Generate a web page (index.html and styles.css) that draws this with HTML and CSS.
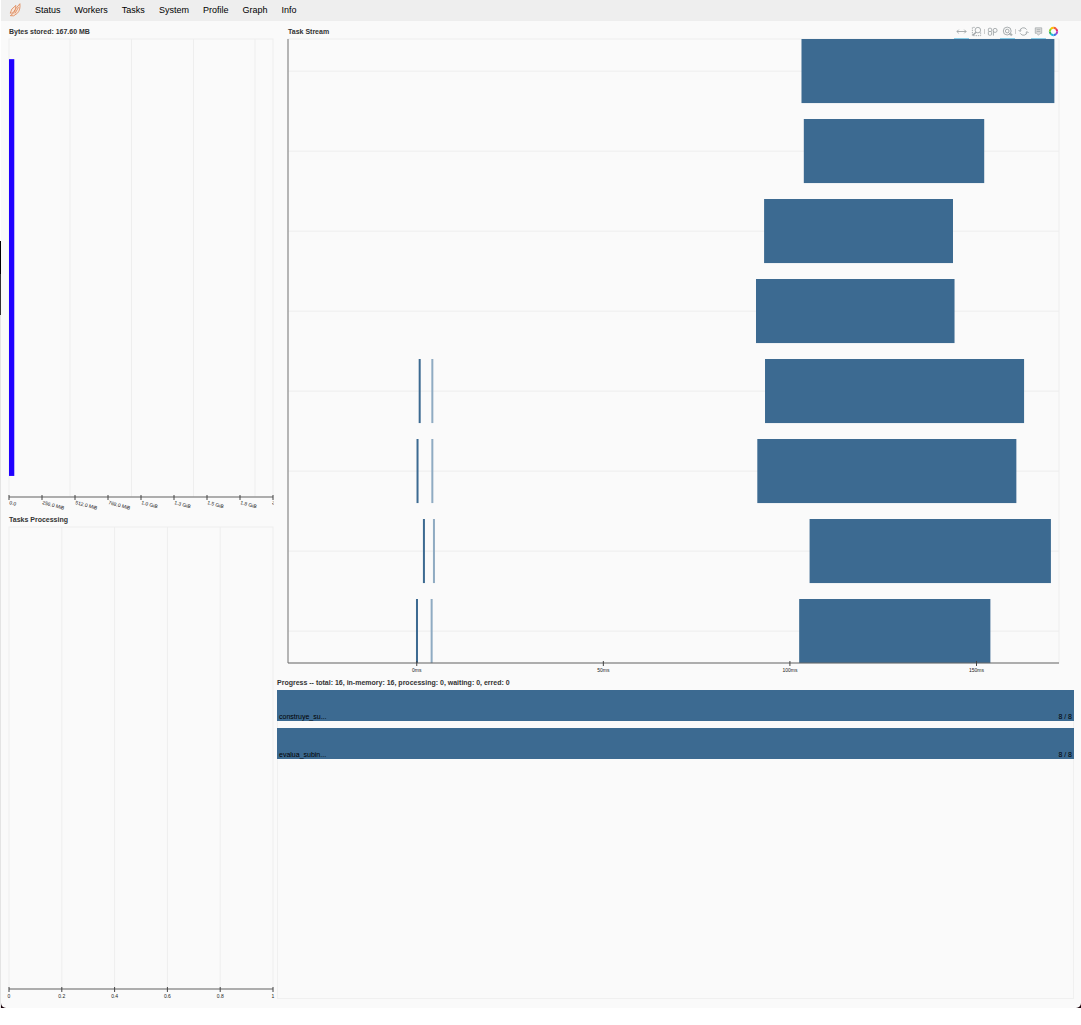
FILE: index.html
```
<!DOCTYPE html>
<html lang="en">
<head>
<meta charset="utf-8">
<meta name="viewport" content="width=device-width, initial-scale=1">
<title>Dask: Status</title>
<link rel="stylesheet" href="styles.css">
</head>
<body>
<div class="frame">
<div class="app">
  <nav class="navbar">
    <a class="brand" href="#" aria-label="Dask">
      <svg viewBox="0 0 11 14" width="12" height="14" fill="#f8e6da" stroke="#dd8352" stroke-width=".8" stroke-linejoin="round">
        <path d="M.7 10.2 2.4 6 6.4 2.4 6 6.2 3.4 9.9Z"/>
        <path d="M6 6 10.4 .7C10.8 4.6 10.200 8 7.8 10.3L4.200 12.800 .8 12.700 5 9.200Z"/>
        <path d="M5.500 10.500 9 4.200" fill="none"/>
      </svg>
    </a>
    <a href="#">Status</a>
    <a href="#">Workers</a>
    <a href="#">Tasks</a>
    <a href="#">System</a>
    <a href="#">Profile</a>
    <a href="#">Graph</a>
    <a href="#">Info</a>
  </nav>

  <main class="dashboard">
    <div class="column">
      <section class="panel bytes">
        <h2>Bytes stored: 167.60 MB</h2>
        <svg class="plot">
          <rect class="outline" width="100%" height="100%"/>
          <g class="grid">
            <line x1="23.1%" x2="23.1%" y2="100%"/><line x1="46.4%" x2="46.4%" y2="100%"/>
            <line x1="69.9%" x2="69.9%" y2="100%"/><line x1="93.2%" x2="93.2%" y2="100%"/>
          </g>
          <rect class="memory" y="4.4%" width="2%" height="91%"/>
        </svg>
        <svg class="axis slanted">
          <line class="rule" x2="100%"/>
          <svg><path d="M0-2V3"/><text>0.0</text></svg>
          <svg x="12.5%"><path d="M0-2V3"/><text>256.0 MiB</text></svg>
          <svg x="25%"><path d="M0-2V3"/><text>512.0 MiB</text></svg>
          <svg x="37.5%"><path d="M0-2V3"/><text>768.0 MiB</text></svg>
          <svg x="50%"><path d="M0-2V3"/><text>1.0 GiB</text></svg>
          <svg x="62.5%"><path d="M0-2V3"/><text>1.3 GiB</text></svg>
          <svg x="75%"><path d="M0-2V3"/><text>1.5 GiB</text></svg>
          <svg x="87.5%"><path d="M0-2V3"/><text>1.8 GiB</text></svg>
          <svg x="100%"><path d="M0-2V3"/></svg>
          <svg class="cut" x="99.5%" width="2"><text>2</text></svg>
        </svg>
      </section>

      <section class="panel processing">
        <h2>Tasks Processing</h2>
        <svg class="plot">
          <rect class="outline" width="100%" height="100%"/>
          <g class="grid">
            <line x1="20%" x2="20%" y2="100%"/><line x1="40%" x2="40%" y2="100%"/>
            <line x1="60%" x2="60%" y2="100%"/><line x1="80%" x2="80%" y2="100%"/>
          </g>
        </svg>
        <svg class="axis">
          <line class="rule" x2="100%"/>
          <svg><path d="M0-2V3"/><text y="9">0</text></svg>
          <svg x="20%"><path d="M0-2V3"/><text y="9">0.2</text></svg>
          <svg x="40%"><path d="M0-2V3"/><text y="9">0.4</text></svg>
          <svg x="60%"><path d="M0-2V3"/><text y="9">0.6</text></svg>
          <svg x="80%"><path d="M0-2V3"/><text y="9">0.8</text></svg>
          <svg x="100%"><path d="M0-2V3"/><text y="9">1</text></svg>
        </svg>
      </section>
    </div>

    <div class="column">
      <section class="panel stream">
        <header>
          <h2>Task Stream</h2>
          <div class="toolbar">
            <button class="active" aria-label="Pan"><svg viewBox="0 0 12 12"><path d="M1 6h10M3 4 1 6l2 2M9 4l2 2-2 2"/></svg></button>
            <button aria-label="Box zoom"><svg viewBox="0 0 12 12"><path d="M4 1.500H1.500v9h9V7" stroke-dasharray="1.500 1"/><circle cx="7.500" cy="4.500" r="3"/><path d="m5.500 6.700-3.500 3.500" stroke-width="1.500"/></svg></button>
            <i></i>
            <button aria-label="Wheel zoom"><svg viewBox="0 0 12 12"><rect x="1.500" y="2.500" width="3.500" height="3.500" rx="1"/><rect x="1.500" y="6" width="3.500" height="4" rx="1"/><path d="M7 10.500V5"/><circle cx="8.800" cy="4.800" r="2.200"/></svg></button>
            <button class="active" aria-label="Zoom"><svg viewBox="0 0 12 12"><circle cx="5.700" cy="5.500" r="4.300"/><circle cx="5.700" cy="5.500" r="2"/><path d="M8.500 9.500h3M10 8v3M7 7l2 2"/></svg></button>
            <i></i>
            <button aria-label="Reset"><svg viewBox="0 0 12 12"><path d="M2 5.500a4 4 0 0 1 7.500-1.500M10 6.500A4 4 0 0 1 2.500 8M.700 4.500 2 6l1.700-1.300M8.300 7.500 10 6l1.500 1.500"/></svg></button>
            <button class="active" aria-label="Hover"><svg viewBox="0 0 12 12"><path d="M2.500 2h7v6H8l-2 2-2-2H2.500ZM4 4h4M4 6h4" fill="#ddd" stroke-width=".8"/></svg></button>
            <a href="#" aria-label="Bokeh"><svg viewBox="0 0 12 12">
              <g stroke-width="2.200" stroke-linecap="butt">
                <path stroke="#ffc400" d="M3.200 3.200A4 4 0 0 1 6 2"/><path stroke="#f4652c" d="M6 2A4 4 0 0 1 8.800 3.200"/>
                <path stroke="#e92a63" d="M8.800 3.200A4 4 0 0 1 10 6"/><path stroke="#a83ccf" d="M10 6A4 4 0 0 1 8.800 8.800"/>
                <path stroke="#3f6fe0" d="M8.800 8.800A4 4 0 0 1 6 10"/><path stroke="#20b8e8" d="M6 10A4 4 0 0 1 3.200 8.800"/>
                <path stroke="#2fb868" d="M3.200 8.800A4 4 0 0 1 2 6"/><path stroke="#8cd128" d="M2 6A4 4 0 0 1 3.200 3.200"/>
              </g></svg></a>
          </div>
        </header>
        <svg class="plot">
          <rect class="outline" width="100%" height="100%"/>
          <svg height="10.3%"><line x2="100%" y1="50%" y2="50%"/><rect x="66.6%" width="32.8%" height="100%"/></svg>
          <svg y="12.82%" height="10.3%"><line x2="100%" y1="50%" y2="50%"/><rect x="66.9%" width="23.4%" height="100%"/></svg>
          <svg y="25.64%" height="10.3%"><line x2="100%" y1="50%" y2="50%"/><rect x="61.75%" width="24.5%" height="100%"/></svg>
          <svg y="38.46%" height="10.3%"><line x2="100%" y1="50%" y2="50%"/><rect x="60.7%" width="25.75%" height="100%"/></svg>
          <svg y="51.28%" height="10.3%"><line x2="100%" y1="50%" y2="50%"/><rect x="16.95%" width="2" height="100%"/><rect class="brief" x="18.59%" width="2" height="100%"/><rect x="61.87%" width="33.6%" height="100%"/></svg>
          <svg y="64.1%" height="10.3%"><line x2="100%" y1="50%" y2="50%"/><rect x="16.67%" width="2" height="100%"/><rect class="brief" x="18.59%" width="2" height="100%"/><rect x="60.87%" width="33.6%" height="100%"/></svg>
          <svg y="76.92%" height="10.3%"><line x2="100%" y1="50%" y2="50%"/><rect x="17.5%" width="2" height="100%"/><rect class="brief" x="18.8%" width="2" height="100%"/><rect x="67.65%" width="31.3%" height="100%"/></svg>
          <svg y="89.74%" height="10.3%"><line x2="100%" y1="50%" y2="50%"/><rect x="16.6%" width="2" height="100%"/><rect class="brief" x="18.5%" width="2" height="100%"/><rect x="66.3%" width="24.8%" height="100%"/></svg>
          <line class="spine" y2="100%"/>
        </svg>
        <svg class="axis">
          <line class="rule" x2="100%"/>
          <svg x="16.7%"><path d="M0-2V3"/><text y="9">0ms</text></svg>
          <svg x="40.9%"><path d="M0-2V3"/><text y="9">50ms</text></svg>
          <svg x="65.1%"><path d="M0-2V3"/><text y="9">100ms</text></svg>
          <svg x="89.3%"><path d="M0-2V3"/><text y="9">150ms</text></svg>
        </svg>
      </section>

      <section class="panel progress">
        <h2>Progress -- total: 16, in-memory: 16, processing: 0, waiting: 0, erred: 0</h2>
        <div class="bars">
          <div class="bar"><span>construye_su...</span><span>8 / 8</span></div>
          <div class="bar"><span>evalua_subin...</span><span>8 / 8</span></div>
        </div>
      </section>
    </div>
  </main>
</div>
</div>
</body>
</html>
```
FILE: styles.css
```
* { box-sizing: border-box; }

body {
  margin: 0;
  background: #fff;
  color: #000;
  font-family: "Liberation Sans", Arial, sans-serif;
}

/* The window's rounded corners and left edge show what lies behind it. */
.frame {
  height: calc(100vh - 17px);
  padding-left: 1px;
  background:
    linear-gradient(#fff 241px, #000 241px 274px, #333 274px 315px, #e4e4e4 315px) 0 0 / 1px 100% no-repeat,
    #1a0008;
}

.app {
  display: flex;
  flex-direction: column;
  height: 100%;
  background: #fafafa;
  border-radius: 0 0 5px 5px;
}

.navbar {
  display: flex;
  flex: none;
  align-items: center;
  gap: 14px;
  height: 21px;
  padding: 0 0 1px 8px;
  background: #eee;
}

.navbar a {
  color: #000;
  font-size: 9px;
  line-height: 12px;
  text-decoration: none;
}

.navbar .brand { height: 14px; }

.dashboard {
  display: grid;
  flex: 1;
  grid-template-columns: 264fr 797fr;
  gap: 4px;
  min-height: 0;
  padding: 1px 7px 8px 8px;
}

.column {
  display: flex;
  flex-direction: column;
  min-width: 0;
  min-height: 0;
}

.panel {
  display: grid;
  flex: 1 1 0;
  grid-template-rows: 17px minmax(0, 1fr) 12px;
  min-height: 0;
}

.bytes { grid-template-rows: 17px minmax(0, 1fr) 14px; }

.processing { grid-template-rows: 16px minmax(0, 1fr) 11px; }

.stream {
  flex-grow: 2;
  grid-template-rows: 17px minmax(0, 1fr) 11px;
  padding: 0 15px 0 11px;
}

.progress { grid-template-rows: 16px minmax(0, 1fr) 1px; }

h2 {
  margin: 0;
  color: #333;
  font-size: 7px;
  line-height: 20px;
  white-space: nowrap;
}

.processing h2, .progress h2 { line-height: 18px; }

header {
  display: flex;
  justify-content: space-between;
}

.plot, .axis {
  display: block;
  width: 100%;
  height: 100%;
  overflow: visible;
}

.plot line { stroke: #eee; }
.plot .outline { fill: none; stroke: #eee; }
.plot .spine { stroke: #777; }
.plot .memory { fill: #1f00ff; }
.stream .plot svg rect { fill: #3c6a91; }
.stream .plot svg .brief { fill: #8fabc2; }

.axis svg { overflow: visible; }
.axis .rule { stroke: #666; }
.axis path { stroke: #444; }

.axis text {
  fill: #222;
  font-size: 5px;
  text-anchor: middle;
}

.slanted text {
  text-anchor: start;
  transform: translate(0, 7px) rotate(15deg);
}

.axis .cut { overflow: hidden; }

.toolbar {
  display: flex;
  align-items: center;
  height: 17px;
  margin-right: -2px;
}

.toolbar button, .toolbar a {
  display: grid;
  place-items: center;
  width: 15px;
  height: 17px;
  padding: 3px 0 0;
  border: 0;
  border-bottom: 1px solid transparent;
  background: none;
}

.toolbar .active { border-bottom-color: #26aae1; }

.toolbar svg {
  width: 11px;
  height: 11px;
  fill: none;
  stroke: #a1a6a9;
}

.toolbar i {
  width: 1px;
  height: 5px;
  margin-top: 2px;
  background: #ccc;
}

.bars {
  display: flex;
  flex-direction: column;
  gap: 7px;
  border: 1px solid #f0f0f0;
  border-top: 0;
}

.bar {
  display: flex;
  align-items: flex-end;
  justify-content: space-between;
  height: 31px;
  margin: 0 -1px;
  padding: 0 2px;
  background: #3c6a91;
  font-size: 7px;
  line-height: 9px;
}
```
